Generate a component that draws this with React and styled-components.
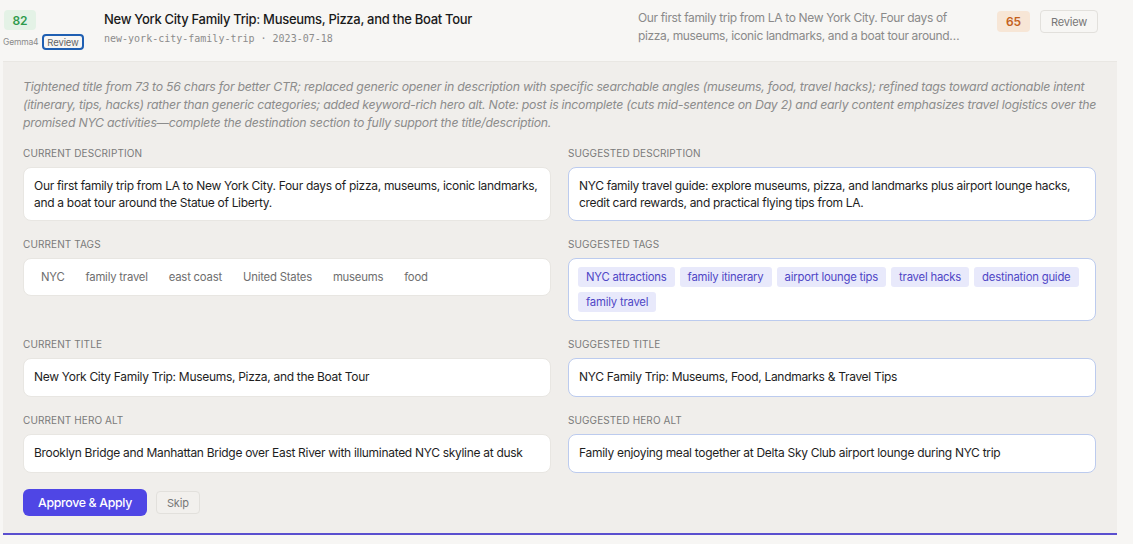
import React from "react";
import styled, { createGlobalStyle } from "styled-components";

const GlobalStyle = createGlobalStyle`
  html, body {
    margin: 0;
    padding: 0;
    background: #f7f6f4;
    font-family: Inter, "Noto Sans", "Liberation Sans", sans-serif;
    color: #1c1c1c;
  }
  * { box-sizing: border-box; }
`;

const List = styled.div`
  width: 1114px;
  margin-left: 3px;
`;

const Row = styled.div`
  display: flex;
  align-items: flex-start;
  height: 61px;
`;

const ScoreCell = styled.div`
  width: 78px;
  margin-left: 1px;
  padding-top: 10px;
  display: flex;
  flex-direction: column;
  align-items: flex-start;
`;

const Score = styled.div`
  display: flex;
  align-items: center;
  justify-content: center;
  width: ${(p) => p.$w || 32}px;
  height: ${(p) => p.$h || 20}px;
  border-radius: 4px;
  font-size: 12px;
  font-weight: 600;
  background: ${(p) => (p.$tone === "warn" ? "#f7e6d6" : "#e4f2e6")};
  color: ${(p) => (p.$tone === "warn" ? "#c4611c" : "#2e9a4c")};
`;

const Meta = styled.div`
  display: flex;
  align-items: center;
  gap: 4px;
  margin-top: 4px;
  margin-left: -1px;
`;

const Model = styled.span`
  font-size: 8.5px;
  letter-spacing: -0.2px;
  color: #8a8a8a;
`;

const Pill = styled.span`
  display: inline-flex;
  align-items: center;
  height: 16px;
  padding: 0 3px;
  border: 2px solid #1f5fb2;
  border-radius: 4px;
  font-size: 9.5px;
  letter-spacing: -0.1px;
  color: #666;
`;

const TitleCell = styled.div`
  margin-left: 22px;
  width: 534px;
  padding-top: 11px;
`;

const Title = styled.div`
  font-size: 13px;
  font-weight: 500;
  letter-spacing: -0.3px;
  line-height: 17px;
  color: #1a1a1a;
`;

const Slug = styled.div`
  margin-top: 4px;
  font-family: "DejaVu Sans Mono", "Liberation Mono", monospace;
  font-size: 10px;
  line-height: 14px;
  color: #8c8c8c;
`;

const Preview = styled.div`
  width: 326px;
  padding-top: 9px;
  font-size: 12px;
  letter-spacing: -0.35px;
  line-height: 18px;
  color: #8a8a8a;
  display: -webkit-box;
  -webkit-line-clamp: 2;
  -webkit-box-orient: vertical;
  overflow: hidden;
`;

const RightCell = styled.div`
  margin-left: 33px;
  padding-top: 10px;
  display: flex;
  align-items: flex-start;
  gap: 10px;
`;

const Badge = styled(Score)`
  margin-top: 1px;
`;

const GhostButton = styled.button`
  height: ${(p) => p.$h || 23}px;
  padding: 0 ${(p) => p.$px || 10}px;
  border: 1px solid #e2e0dc;
  border-radius: 4px;
  background: ${(p) => p.$bg || "#f7f6f4"};
  font-family: inherit;
  font-size: 11px;
  letter-spacing: -0.2px;
  color: #777;
  cursor: pointer;
`;

const Panel = styled.div`
  background: #f0eeeb;
  border-top: 1px solid #e9e7e3;
  border-bottom: 2px solid #5a4fcf;
  padding: 16px 20px 17px 20px;
`;

const Rationale = styled.p`
  margin: 0;
  font-size: 12.3px;
  font-style: italic;
  letter-spacing: -0.25px;
  line-height: 18px;
  color: #8c8c8c;
`;

const Fields = styled.div`
  display: grid;
  grid-template-columns: 528px 528px;
  column-gap: 17px;
  row-gap: 17px;
  margin-top: 15px;
`;

const Field = styled.div`
  display: flex;
  flex-direction: column;
`;

const Label = styled.div`
  font-size: 10px;
  line-height: 12px;
  letter-spacing: 0.1px;
  text-transform: uppercase;
  color: #7a7a7a;
  margin-bottom: 8px;
`;

const Box = styled.div`
  min-height: 39px;
  background: #fff;
  border: 1px solid ${(p) => (p.$suggested ? "#bccbee" : "#e8e6e2")};
  border-radius: 8px;
  padding: 9px 10px;
  font-size: 12px;
  letter-spacing: -0.3px;
  line-height: 17px;
  color: #1e1e1e;
`;

const TagBox = styled(Box)`
  min-height: 38px;
  display: flex;
  flex-wrap: wrap;
  gap: 5px 5px;
  padding: 8px 9px;
`;

const Tag = styled.span`
  display: inline-flex;
  align-items: center;
  height: 20px;
  padding: 0 8px;
  border-radius: 3px;
  font-size: 11.3px;
  letter-spacing: -0.2px;
  background: ${(p) => (p.$suggested ? "#e8e9fb" : "transparent")};
  color: ${(p) => (p.$suggested ? "#4f46c6" : "#6e6e6e")};
`;

const Actions = styled.div`
  display: flex;
  align-items: center;
  gap: 9px;
  margin-top: 16px;
`;

const PrimaryButton = styled.button`
  height: 27px;
  padding: 0 15px;
  border: none;
  border-radius: 6px;
  background: #4f46e5;
  color: #fff;
  font-family: inherit;
  font-size: 12.3px;
  letter-spacing: -0.3px;
  font-weight: 500;
  cursor: pointer;
`;

const currentTags = ["NYC", "family travel", "east coast", "United States", "museums", "food"];
const suggestedTags = [
  "NYC attractions",
  "family itinerary",
  "airport lounge tips",
  "travel hacks",
  "destination guide",
  "family travel",
];

const fields = [
  {
    key: "DESCRIPTION",
    current:
      "Our first family trip from LA to New York City. Four days of pizza, museums, iconic landmarks, and a boat tour around the Statue of Liberty.",
    suggested:
      "NYC family travel guide: explore museums, pizza, and landmarks plus airport lounge hacks, credit card rewards, and practical flying tips from LA.",
  },
  { key: "TAGS", tags: true },
  {
    key: "TITLE",
    current: "New York City Family Trip: Museums, Pizza, and the Boat Tour",
    suggested: "NYC Family Trip: Museums, Food, Landmarks & Travel Tips",
  },
  {
    key: "HERO ALT",
    current: "Brooklyn Bridge and Manhattan Bridge over East River with illuminated NYC skyline at dusk",
    suggested: "Family enjoying meal together at Delta Sky Club airport lounge during NYC trip",
  },
];

export default function App() {
  return (
    <>
      <GlobalStyle />
      <List>
        <Row>
          <ScoreCell>
            <Score>82</Score>
            <Meta>
              <Model>Gemma4</Model>
              <Pill>Review</Pill>
            </Meta>
          </ScoreCell>
          <TitleCell>
            <Title>New York City Family Trip: Museums, Pizza, and the Boat Tour</Title>
            <Slug>new-york-city-family-trip · 2023-07-18</Slug>
          </TitleCell>
          <Preview>
            Our first family trip from LA to New York City. Four days of pizza, museums, iconic
            landmarks, and a boat tour around the Statue of Liberty.
          </Preview>
          <RightCell>
            <Badge $tone="warn" $w={33} $h={21}>65</Badge>
            <GhostButton $px={10}>Review</GhostButton>
          </RightCell>
        </Row>
        <Panel>
          <Rationale>
            Tightened title from 73 to 56 chars for better CTR; replaced generic opener in
            description with specific searchable angles (museums, food, travel hacks); refined tags
            toward actionable intent (itinerary, tips, hacks) rather than generic categories; added
            keyword-rich hero alt. Note: post is incomplete (cuts mid-sentence on Day 2) and early
            content emphasizes travel logistics over the promised NYC activities—complete the
            destination section to fully support the title/description.
          </Rationale>
          <Fields>
            {fields.map((f) => (
              <React.Fragment key={f.key}>
                <Field>
                  <Label>Current {f.key}</Label>
                  {f.tags ? (
                    <TagBox>
                      {currentTags.map((t) => (
                        <Tag key={t}>{t}</Tag>
                      ))}
                    </TagBox>
                  ) : (
                    <Box>{f.current}</Box>
                  )}
                </Field>
                <Field>
                  <Label>Suggested {f.key}</Label>
                  {f.tags ? (
                    <TagBox $suggested>
                      {suggestedTags.map((t, i) => (
                        <Tag key={i} $suggested>{t}</Tag>
                      ))}
                    </TagBox>
                  ) : (
                    <Box $suggested>{f.suggested}</Box>
                  )}
                </Field>
              </React.Fragment>
            ))}
          </Fields>
          <Actions>
            <PrimaryButton>Approve &amp; Apply</PrimaryButton>
            <GhostButton $bg="#f2f0ed" $px={10}>Skip</GhostButton>
          </Actions>
        </Panel>
      </List>
    </>
  );
}
